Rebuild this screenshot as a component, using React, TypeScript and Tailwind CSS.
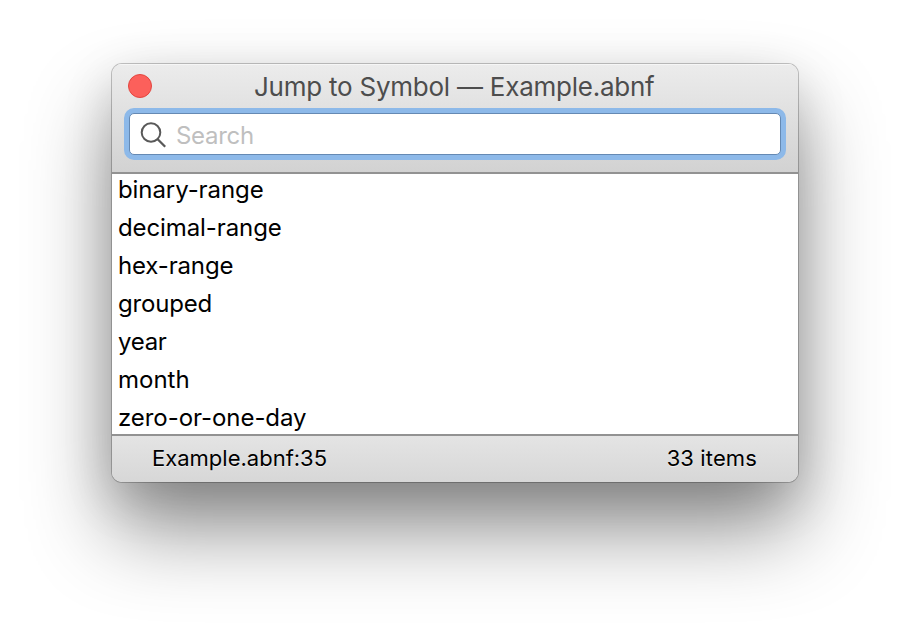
const symbols = [
  { name: 'binary-range', tracking: 'tracking-[-0.08px]' },
  { name: 'decimal-range', tracking: 'tracking-[-0.1px]' },
  { name: 'hex-range', tracking: 'tracking-[-0.15px]' },
  { name: 'grouped', tracking: 'tracking-[-0.2px]' },
  { name: 'year', tracking: 'tracking-[-0.3px]' },
  { name: 'month', tracking: 'tracking-[0px]' },
  { name: 'zero-or-one-day', tracking: 'tracking-[-0.06px]' },
];

function SearchIcon() {
  return (
    <svg className="ml-[10px] h-[28px] w-[28px] shrink-0" viewBox="0 0 28 28" fill="none" stroke="#595959" strokeWidth="2">
      <circle cx="11" cy="12.5" r="9.3" />
      <path d="M17.7 19.2 25.2 26.7" strokeWidth="2.3" />
    </svg>
  );
}

export default function App() {
  return (
    <div className="h-[642px] w-[910px] overflow-hidden bg-white pt-16 pl-28 font-['Inter','Liberation_Sans',sans-serif]">
      <div className="h-[418px] w-[686px] rounded-[10px] shadow-[0_0_0_1px_rgba(0,0,0,0.22),0_48px_84px_0px_rgba(0,0,0,0.43),0_16px_50px_rgba(0,0,0,0.15)]">
        <div className="flex h-full flex-col overflow-hidden rounded-[10px]">
          <header className="h-[110px] shrink-0 border-b-2 border-[#929292] bg-linear-to-b from-[#ececec] to-[#d2d2d2] shadow-[inset_0_1px_0_#f6f6f6]">
            <div className="flex h-[45px] items-start pl-4">
              <div className="mt-[10px] size-6 shrink-0 rounded-full border border-[#e2463f] bg-[#fc605b]" />
              <h1 className="ml-[102px] whitespace-nowrap text-[26px] leading-[46px] tracking-[-0.24px] text-[#4d4d4d]">
                Jump to Symbol — Example.abnf
              </h1>
            </div>
            <div className="mt-[4px] ml-[17px] flex h-[42px] w-[652px] items-center rounded-[5px] border border-[#6589b3] bg-white shadow-[0_0_0_5px_#8db9e9]">
              <SearchIcon />
              <span className="ml-[8px] pt-[3px] text-[24px] tracking-[-0.3px] text-[#bfbfbf]">Search</span>
            </div>
          </header>
          <main className="h-[260px] overflow-hidden bg-white">
            <ul className="-mt-[3px]">
              {symbols.map((symbol) => (
                <li key={symbol.name} className={`h-[38px] pl-[6px] text-[24px] leading-[38px] text-black ${symbol.tracking}`}>
                  <span>{symbol.name}</span>
                </li>
              ))}
            </ul>
          </main>
          <footer className="flex h-[48px] shrink-0 items-center justify-between border-t-2 border-[#929292] bg-linear-to-b from-[#e4e4e4] to-[#d7d7d7] pr-[41px] pb-[2px] pl-[40px] text-[22px] text-black [text-shadow:0_1px_0_rgba(255,255,255,0.6)]">
            <span>Example.abnf:35</span>
            <span className="tracking-[0.12px]">33 items</span>
          </footer>
        </div>
      </div>
    </div>
  );
}
